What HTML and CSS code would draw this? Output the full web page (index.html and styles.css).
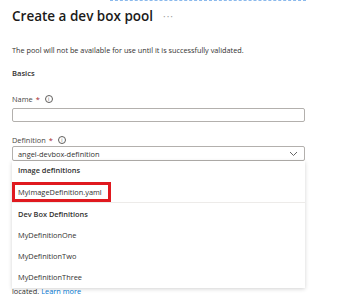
FILE: index.html
```html
<!DOCTYPE html>
<html lang="en">
<head>
    <meta charset="UTF-8">
    <title>Create a dev box pool</title>
    <link rel="stylesheet" href="styles.css">
</head>
<body>
    <div class="crumbs"></div>

    <div class="page">
        <div class="title-row">
            <h1>Create a dev box pool</h1>
            <span class="more">···</span>
        </div>

        <p class="intro">The pool will not be available for use until it is successfully validated.</p>

        <h2>Basics</h2>

        <div class="field">
            <label>Name <span class="req">*</span> <span class="info">i</span></label>
            <input type="text" class="text-input">
        </div>

        <div class="field field-def">
            <label>Definition <span class="req">*</span> <span class="info">i</span></label>
            <div class="select">
                <span>angel-devbox-definition</span>
                <svg class="chevron" width="9" height="6" viewBox="0 0 9 6">
                    <path d="M1 1 L4.5 4.5 L8 1" fill="none" stroke="#666" stroke-width="1"/>
                </svg>
            </div>

            <div class="dropdown">
                <div class="group">
                    <div class="group-title first">Image definitions</div>
                    <div class="option highlight">MyImageDefinition.yaml</div>
                </div>
                <div class="group">
                    <div class="group-title">Dev Box Definitions</div>
                    <div class="option">MyDefinitionOne</div>
                    <div class="option">MyDefinitionTwo</div>
                    <div class="option">MyDefinitionThree</div>
                </div>
            </div>
        </div>

        <p class="footnote">located. <a href="#">Learn more</a></p>
    </div>
</body>
</html>
```

FILE: styles.css
```css
body {
    margin: 0;
    font-family: "Open Sans", "Noto Sans", sans-serif;
    color: #323130;
    background: #fff;
}
.crumbs {
    margin-left: 110px;
    width: 196px;
    height: 0;
    border-top: 1.5px dashed #8ab9ec;
}
.page {
    padding: 0 50px 0 12px;
}
.title-row {
    display: flex;
    align-items: center;
    gap: 10px;
    height: 30px;
    margin-top: 0;
}
h1 {
    margin: 0;
    font-size: 13.5px;
    font-weight: 600;
    color: #1b1a19;
}
.more {
    font-size: 10px;
    letter-spacing: 1px;
    color: #a19f9d;
}
.intro {
    margin: 14px 0 0;
    font-size: 7.3px;
    line-height: 10px;
}
h2 {
    margin: 13px 0 0;
    font-size: 7.6px;
    font-weight: 600;
    line-height: 10px;
}
.field {
    margin-top: 16px;
}
.field-def {
    margin-top: 13px;
    position: relative;
}
label {
    display: flex;
    align-items: center;
    gap: 3px;
    font-size: 7.4px;
    line-height: 10px;
    color: #484644;
}
.req {
    color: #a4262c;
}
.info {
    display: inline-block;
    width: 6px;
    height: 6px;
    border: 1px solid #605e5c;
    border-radius: 50%;
    font-size: 5px;
    line-height: 6px;
    text-align: center;
    color: #605e5c;
    margin-left: 2px;
}
.text-input {
    display: block;
    box-sizing: border-box;
    width: 100%;
    height: 14px;
    margin: 4px 0 0;
    padding: 0;
    border: 1px solid #b3b0ad;
    border-radius: 2px;
}
.select {
    box-sizing: border-box;
    display: flex;
    align-items: center;
    justify-content: space-between;
    height: 15px;
    margin-top: 1px;
    padding: 0 6px 0 5px;
    border: 1px solid #b3b0ad;
    border-radius: 2px;
    font-size: 7.4px;
}
.chevron {
    display: block;
}
.dropdown {
    position: absolute;
    left: 0;
    right: 0;
    top: 100%;
    background: #fff;
    box-shadow: 0 1px 4px rgba(0, 0, 0, 0.18);
}
.group + .group {
    border-top: 1px solid #edebe9;
}
.group-title {
    font-size: 7.4px;
    font-weight: 600;
    line-height: 22px;
    padding: 0 6px;
}
.group-title.first {
    line-height: 18px;
}
.option {
    font-size: 7.4px;
    line-height: 21px;
    padding: 0 6px;
}
.option.highlight {
    display: inline-block;
    vertical-align: top;
    box-sizing: border-box;
    width: 99px;
    height: 20px;
    line-height: 14px;
    margin-top: 3px;
    border: 3px solid #e0191f;
    padding: 0 3px;
}
.footnote {
    margin: 125px 0 0;
    font-size: 7.4px;
    line-height: 10px;
}
.footnote a {
    color: #0078d4;
    text-decoration: none;
}
```
